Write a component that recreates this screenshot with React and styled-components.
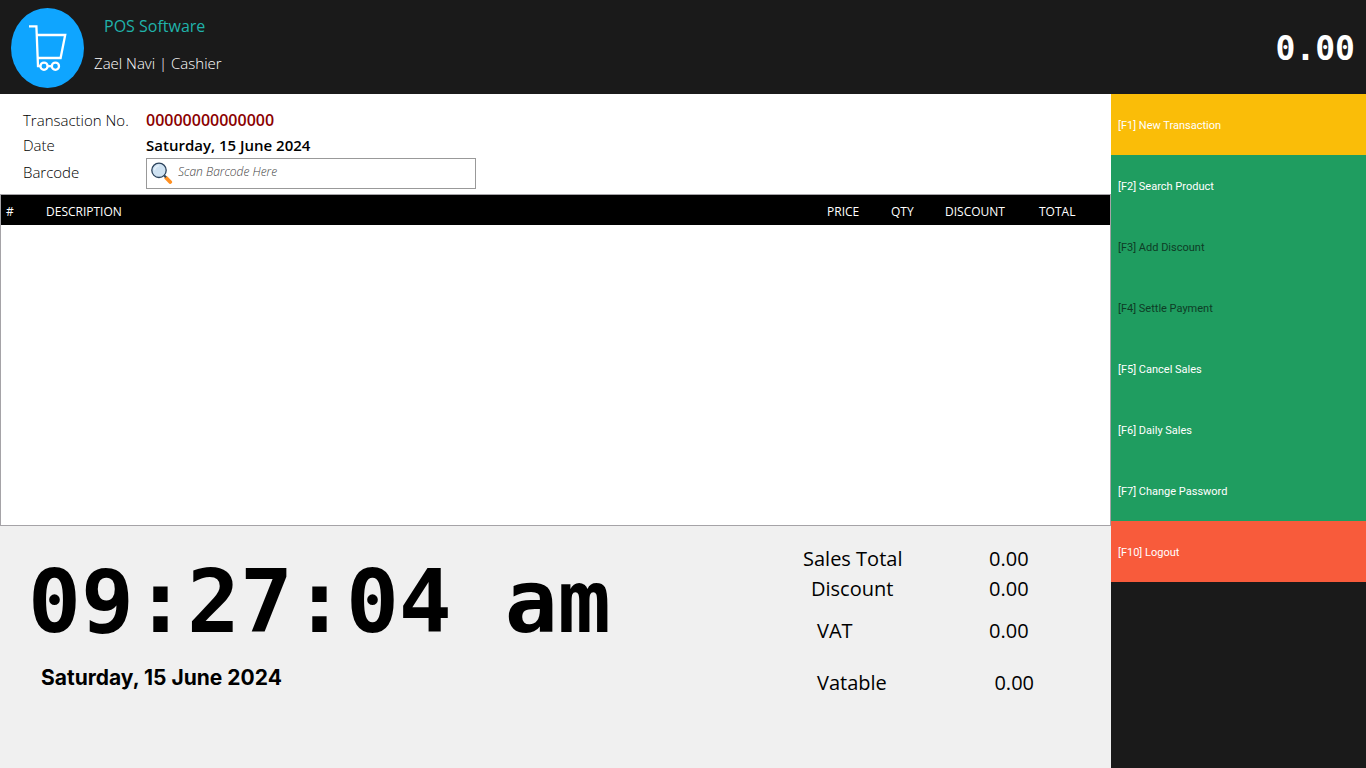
import React from "react";
import styled, { createGlobalStyle } from "styled-components";

const GlobalStyle = createGlobalStyle`
  *, *::before, *::after { box-sizing: border-box; }
  html, body, #root { margin: 0; min-height: 100vh; }
  body {
    background: #f0f0f0;
    color: #000;
    font-family: "Open Sans", "Noto Sans", sans-serif;
  }
`;

const Page = styled.div`
  display: flex;
  flex-direction: column;
  min-height: 100vh;
`;

const TopBar = styled.header`
  display: flex;
  align-items: center;
  justify-content: space-between;
  height: 94px;
  padding: 2px 11px 0;
  background: #1a1a1a;
`;

const Brand = styled.div`
  display: flex;
  gap: 10px;
`;

const Logo = styled.svg`
  display: block;
  width: 73px;
  height: 80px;
`;

const BrandText = styled.div`
  display: flex;
  flex-direction: column;
  gap: 13px;
  padding-top: 6px;
`;

const AppName = styled.h1`
  margin: 0;
  padding-left: 10px;
  color: #20b2aa;
  font-size: 16px;
  line-height: 24px;
  font-weight: 500;
`;

const UserName = styled.p`
  margin: 0;
  color: #fff;
  font-size: 15px;
  line-height: 24px;
  font-weight: 300;
`;

const AmountDue = styled.output`
  padding-top: 2px;
  color: #fff;
  font: bold 33px/40px "DejaVu Sans Mono", monospace;
`;

const Body = styled.div`
  display: flex;
  flex: 1;
`;

const Main = styled.main`
  display: flex;
  flex-direction: column;
  flex: 1;
  min-width: 0;
`;

const Transaction = styled.section`
  display: grid;
  grid-template-columns: 123px 330px;
  grid-template-rows: 25px 25px 31px;
  padding: 14px 23px 5px;
  background: #fff;
  font-size: 15px;
  line-height: 24px;
  font-weight: 300;
`;

const FieldLabel = styled.label`
  padding-top: 2px;
`;

const Value = styled.output`
  color: ${(p) => p.$color || "#000"};
  font-weight: 600;
  font-size: ${(p) => p.$size || 15}px;
`;

const SearchField = styled.div`
  display: flex;
  align-items: flex-start;
  height: 31px;
  padding: 3px 4px 0;
  gap: 5px;
  border: 1px solid #999;
`;

const SearchIcon = styled.svg`
  flex: none;
  width: 22px;
  height: 22px;
`;

const SearchInput = styled.input`
  flex: 1;
  min-width: 0;
  height: 20px;
  padding: 0 0 2px;
  border: 0;
  outline: 0;
  background: transparent;
  font: italic 300 12px/18px "Open Sans", "Noto Sans", sans-serif;

  &::placeholder { color: #444; opacity: 1; }
`;

const GridFrame = styled.section`
  height: 332px;
  border: 1px solid #a5a3a7;
  background: #fff;
`;

const Items = styled.table`
  width: 100%;
  table-layout: fixed;
  border-collapse: collapse;
`;

const Col = styled.col`
  width: ${(p) => (p.$width ? `${p.$width}px` : "auto")};
`;

const HeadCell = styled.th`
  height: 30px;
  padding: 3px 0 0 5px;
  background: #000;
  color: #fff;
  font-size: 12px;
  line-height: 20px;
  font-weight: 400;
  text-align: left;
`;

const Summary = styled.section`
  display: flex;
  justify-content: space-between;
  flex: 1;
  padding: 18px 77px 0 28px;
`;

const ClockBlock = styled.div`
  padding-top: 6px;
`;

const Clock = styled.time`
  display: block;
  white-space: pre;
  font: bold 88px/104px "DejaVu Sans Mono", monospace;
`;

const Today = styled.time`
  display: block;
  padding: 8px 0 0 13px;
  font: bold 21px/32px Inter, sans-serif;
`;

const Totals = styled.dl`
  width: 231px;
  margin: 0;
`;

const TotalRow = styled.div`
  display: flex;
  padding-top: ${(p) => p.$gap}px;
  font-size: 20px;
  line-height: 30px;
`;

const TotalLabel = styled.dt`
  width: 186px;
  padding-left: ${(p) => p.$indent}px;
`;

const TotalValue = styled.dd`
  margin: 0;
  padding-left: ${(p) => p.$indent}px;
`;

const SideMenu = styled.nav`
  display: flex;
  flex-direction: column;
  width: 255px;
  background: #1a1a1a;
`;

const tones = { amber: "#fabd08", green: "#1f9d60", red: "#f85b3b" };

const MenuButton = styled.button`
  height: 61px;
  padding: 2px 7px 0;
  border: 0;
  background: ${(p) => tones[p.$tone]};
  color: #fff;
  font: 400 11px/16px Roboto, sans-serif;
  text-align: left;
  cursor: pointer;

  &:disabled { color: #0e3c26; cursor: default; }
`;

const columns = [
  { title: "#", width: 40 },
  { title: "DESCRIPTION" },
  { title: "PRICE", width: 64 },
  { title: "QTY", width: 54 },
  { title: "DISCOUNT", width: 94 },
  { title: "TOTAL", width: 76 },
];

const totals = [
  { label: "Sales Total", gap: 0, indent: 0, shift: 0 },
  { label: "Discount", gap: 0, indent: 8, shift: 0 },
  { label: "VAT", gap: 12, indent: 14, shift: 0 },
  { label: "Vatable", gap: 22, indent: 14, shift: 6 },
];

const actions = [
  { label: "[F1] New Transaction", tone: "amber" },
  { label: "[F2] Search Product", tone: "green" },
  { label: "[F3] Add Discount", tone: "green", disabled: true },
  { label: "[F4] Settle Payment", tone: "green", disabled: true },
  { label: "[F5] Cancel Sales", tone: "green" },
  { label: "[F6] Daily Sales", tone: "green" },
  { label: "[F7] Change Password", tone: "green" },
  { label: "[F10] Logout", tone: "red" },
];

export default function App() {
  return (
    <Page>
      <GlobalStyle />
      <TopBar>
        <Brand>
          <Logo viewBox="0 0 73 80" aria-hidden="true">
            <ellipse cx="36.5" cy="40" rx="36.5" ry="40" fill="#0fa5ff" />
            <g fill="none" stroke="#fff" strokeWidth="2.3">
              <path d="M18 18.4H25.4L27 58.2H29.5" />
              <path d="M26 27H54.2L49.6 50H27" />
              <circle cx="33" cy="58.2" r="3.6" />
              <circle cx="44.4" cy="58.2" r="3.6" />
              <path d="M36.6 58.2H40.8" />
            </g>
          </Logo>
          <BrandText>
            <AppName>POS Software</AppName>
            <UserName>Zael Navi | Cashier</UserName>
          </BrandText>
        </Brand>
        <AmountDue>0.00</AmountDue>
      </TopBar>
      <Body>
        <Main>
          <Transaction>
            <label htmlFor="transaction-no">Transaction No.</label>
            <Value id="transaction-no" $color="#8b0000" $size={16}>00000000000000</Value>
            <label htmlFor="transaction-date">Date</label>
            <Value id="transaction-date">Saturday, 15 June 2024</Value>
            <FieldLabel htmlFor="barcode">Barcode</FieldLabel>
            <SearchField>
              <SearchIcon viewBox="0 0 22 22" aria-hidden="true">
                <path d="M15.3 16L19.2 20" stroke="#ff9022" strokeWidth="3.8" strokeLinecap="round" />
                <path d="M13.2 13.5L15 15.3" stroke="#2f4a63" strokeWidth="2" />
                <circle cx="8" cy="8.3" r="7.2" fill="#cfe2f2" stroke="#2c435c" strokeWidth="1.3" />
                <path d="M3.6 8.3A4.4 4.4 0 0 1 8 3.9" fill="none" stroke="#e6f2fb" strokeWidth="1.4" />
              </SearchIcon>
              <SearchInput id="barcode" type="text" placeholder="Scan Barcode Here" />
            </SearchField>
          </Transaction>
          <GridFrame>
            <Items>
              <colgroup>
                {columns.map((c) => (
                  <Col key={c.title} $width={c.width} />
                ))}
              </colgroup>
              <thead>
                <tr>
                  {columns.map((c) => (
                    <HeadCell key={c.title} scope="col">{c.title}</HeadCell>
                  ))}
                </tr>
              </thead>
              <tbody />
            </Items>
          </GridFrame>
          <Summary>
            <ClockBlock>
              <Clock>09:27:04 am</Clock>
              <Today dateTime="2024-06-15">Saturday, 15 June 2024</Today>
            </ClockBlock>
            <Totals>
              {totals.map((t) => (
                <TotalRow key={t.label} $gap={t.gap}>
                  <TotalLabel $indent={t.indent}>{t.label}</TotalLabel>
                  <TotalValue $indent={t.shift}>0.00</TotalValue>
                </TotalRow>
              ))}
            </Totals>
          </Summary>
        </Main>
        <SideMenu>
          {actions.map((a) => (
            <MenuButton key={a.label} type="button" $tone={a.tone} disabled={a.disabled}>
              {a.label}
            </MenuButton>
          ))}
        </SideMenu>
      </Body>
    </Page>
  );
}
